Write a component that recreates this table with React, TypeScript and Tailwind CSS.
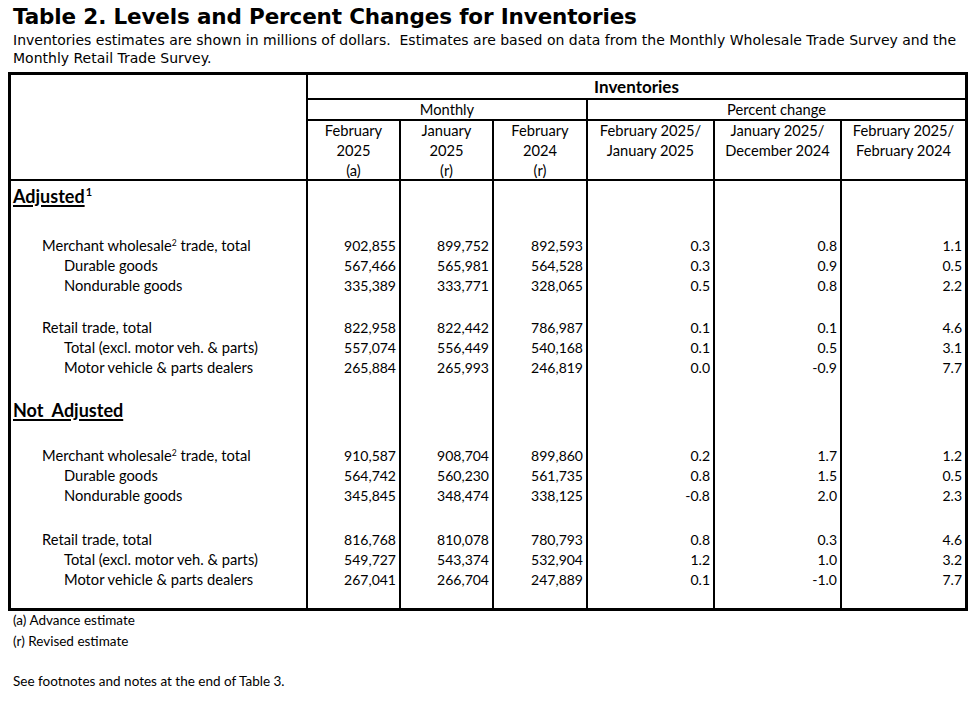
import * as React from "react";

type Row =
  | { kind: "section"; label: string; sup?: string; h: string }
  | { kind: "blank"; h: string }
  | { kind: "data"; label: string; sup?: string; indent: string; values: string[] };

const COLS = "grid grid-cols-[297px_93px_93px_94px_127px_127px_123px]";

const rows: Row[] = [
  { kind: "section", label: "Adjusted", sup: "1", h: "h-[30px]" },
  { kind: "blank", h: "h-[23px]" },
  { kind: "data", label: "Merchant wholesale", sup: "2", indent: "pl-[31px]", values: ["902,855", "899,752", "892,593", "0.3", "0.8", "1.1"] },
  { kind: "data", label: "Durable goods", indent: "pl-[53px]", values: ["567,466", "565,981", "564,528", "0.3", "0.9", "0.5"] },
  { kind: "data", label: "Nondurable goods", indent: "pl-[53px]", values: ["335,389", "333,771", "328,065", "0.5", "0.8", "2.2"] },
  { kind: "blank", h: "h-[22px]" },
  { kind: "data", label: "Retail trade, total", indent: "pl-[31px]", values: ["822,958", "822,442", "786,987", "0.1", "0.1", "4.6"] },
  { kind: "data", label: "Total (excl. motor veh. & parts)", indent: "pl-[53px]", values: ["557,074", "556,449", "540,168", "0.1", "0.5", "3.1"] },
  { kind: "data", label: "Motor vehicle & parts dealers", indent: "pl-[53px]", values: ["265,884", "265,993", "246,819", "0.0", "-0.9", "7.7"] },
  { kind: "blank", h: "h-[20px]" },
  { kind: "section", label: "Not  Adjusted", h: "h-[28px]" },
  { kind: "blank", h: "h-[20px]" },
  { kind: "data", label: "Merchant wholesale", sup: "2", indent: "pl-[31px]", values: ["910,587", "908,704", "899,860", "0.2", "1.7", "1.2"] },
  { kind: "data", label: "Durable goods", indent: "pl-[53px]", values: ["564,742", "560,230", "561,735", "0.8", "1.5", "0.5"] },
  { kind: "data", label: "Nondurable goods", indent: "pl-[53px]", values: ["345,845", "348,474", "338,125", "-0.8", "2.0", "2.3"] },
  { kind: "blank", h: "h-[24px]" },
  { kind: "data", label: "Retail trade, total", indent: "pl-[31px]", values: ["816,768", "810,078", "780,793", "0.8", "0.3", "4.6"] },
  { kind: "data", label: "Total (excl. motor veh. & parts)", indent: "pl-[53px]", values: ["549,727", "543,374", "532,904", "1.2", "1.0", "3.2"] },
  { kind: "data", label: "Motor vehicle & parts dealers", indent: "pl-[53px]", values: ["267,041", "266,704", "247,889", "0.1", "-1.0", "7.7"] },
  { kind: "blank", h: "h-[20px]" },
];

const colHeads = [
  ["February", "2025", "(a)"],
  ["January", "2025", "(r)"],
  ["February", "2024", "(r)"],
  ["February 2025/", "January 2025"],
  ["January 2025/", "December 2024"],
  ["February 2025/", "February 2024"],
];

function BodyRow({ row }: { row: Row }) {
  if (row.kind === "data") {
    return (
      <div className={`${COLS} h-[20px] items-stretch`}>
        <div className={`border-r-2 border-black flex items-center whitespace-nowrap text-[14.7px] ${row.indent}`}>
          <span>
            {row.label}
            {row.sup && <sup className="text-[8.5px] -top-[5px]">{row.sup}</sup>}
            {row.sup && " trade, total"}
          </span>
        </div>
        {row.values.map((v, i) => (
          <div
            key={i}
            className={`flex items-center justify-end pr-[3px] ${i < 5 ? "border-r-2 border-black" : ""}`}
          >
            {v}
          </div>
        ))}
      </div>
    );
  }
  return (
    <div className={`${COLS} ${row.h}`}>
      <div className="border-r-2 border-black flex items-center pl-[2px]">
        {row.kind === "section" && (
          <span className="font-bold text-[18px] underline underline-offset-[2px] decoration-[1.5px] whitespace-pre">
            {row.label}
            {row.sup && <sup className="text-[11px] -top-[7px] ml-px no-underline inline-block">{row.sup}</sup>}
          </span>
        )}
      </div>
      {[0, 1, 2, 3, 4, 5].map((i) => (
        <div key={i} className={i < 5 ? "border-r-2 border-black" : ""} />
      ))}
    </div>
  );
}

export default function App() {
  return (
    <div className="w-[973px] h-[702px] bg-white text-black overflow-hidden font-['Lato',sans-serif] text-[14px]">
      {/* ── Title ─────────────────────────────────────── */}
      <div className="pl-[13px] pt-[3px]">
        <h1 className="font-['DejaVu_Sans',sans-serif] font-bold text-[21.5px] leading-[28px] tracking-[-0.15px]">
          Table 2. Levels and Percent Changes for Inventories
        </h1>
        <p className="font-['DejaVu_Sans',sans-serif] text-[14px] leading-[18px] whitespace-pre">
          {"Inventories estimates are shown in millions of dollars.  Estimates are based on data from the Monthly Wholesale Trade Survey and the\nMonthly Retail Trade Survey."}
        </p>
      </div>

      {/* ── Table ─────────────────────────────────────── */}
      <div className="mt-[5px] ml-[8px] w-[960px] border-[3px] border-black">
        {/* header */}
        <div className={`${COLS} grid-rows-[25px_21px_60px] text-[14.7px]`}>
          <div className="row-span-3 border-r-2 border-b-2 border-black" />
          <div className="col-span-6 border-b-2 border-black flex items-center justify-center font-bold text-[17px]">
            Inventories
          </div>
          <div className="col-span-3 border-r-2 border-b-2 border-black flex items-center justify-center">
            Monthly
          </div>
          <div className="col-span-3 border-b-2 border-black flex items-center justify-center">
            Percent change
          </div>
          {colHeads.map((lines, i) => (
            <div
              key={i}
              className={`border-b-2 border-black flex flex-col items-center leading-[20px] -mt-px ${i < 5 ? "border-r-2" : ""}`}
            >
              {lines.map((l, j) => (
                <span key={j}>{l}</span>
              ))}
            </div>
          ))}
        </div>
        {/* body */}
        {rows.map((r, i) => (
          <BodyRow key={i} row={r} />
        ))}
      </div>

      {/* ── Footnotes ─────────────────────────────────── */}
      <div className="pl-[13px] -mt-px text-[13.5px] leading-[21px]">
        <p>(a) Advance estimate</p>
        <p>(r) Revised estimate</p>
        <p className="mt-[19px]">See footnotes and notes at the end of Table 3.</p>
      </div>
    </div>
  );
}
